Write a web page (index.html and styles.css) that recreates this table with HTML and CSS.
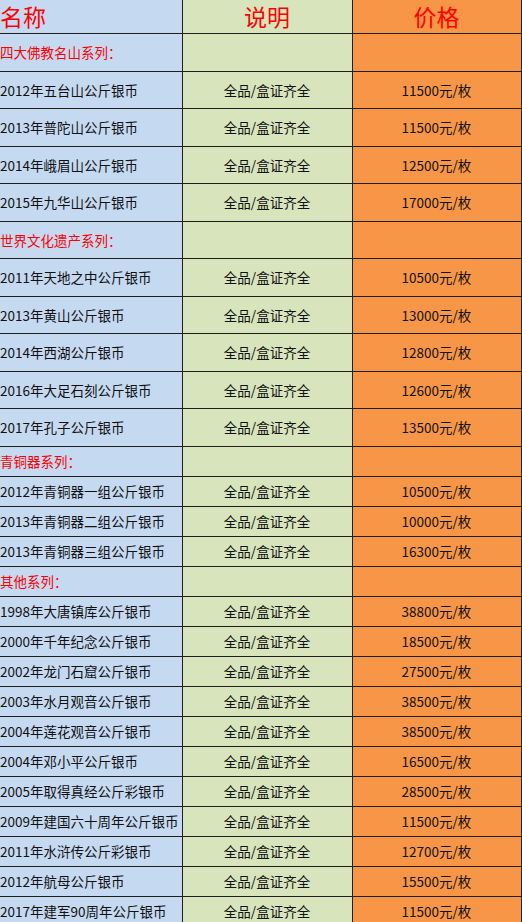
FILE: index.html
```html
<!DOCTYPE html>
<html lang="zh-CN">
<head>
<meta charset="utf-8">
<title>价格表</title>
<link rel="stylesheet" href="styles.css">
</head>
<body>
<table class="price-table">
  <colgroup>
    <col class="col-name">
    <col class="col-desc">
    <col class="col-price">
  </colgroup>
  <thead>
    <tr class="row-head">
      <th class="c-name">名称</th>
      <th class="c-desc">说明</th>
      <th class="c-price">价格</th>
    </tr>
  </thead>
  <tbody class="tall">
    <tr class="section"><td class="c-name">四大佛教名山系列：</td><td class="c-desc"></td><td class="c-price"></td></tr>
    <tr><td class="c-name">2012年五台山公斤银币</td><td class="c-desc">全品/盒证齐全</td><td class="c-price">11500元/枚</td></tr>
    <tr><td class="c-name">2013年普陀山公斤银币</td><td class="c-desc">全品/盒证齐全</td><td class="c-price">11500元/枚</td></tr>
    <tr><td class="c-name">2014年峨眉山公斤银币</td><td class="c-desc">全品/盒证齐全</td><td class="c-price">12500元/枚</td></tr>
    <tr><td class="c-name">2015年九华山公斤银币</td><td class="c-desc">全品/盒证齐全</td><td class="c-price">17000元/枚</td></tr>
    <tr class="section"><td class="c-name">世界文化遗产系列：</td><td class="c-desc"></td><td class="c-price"></td></tr>
    <tr><td class="c-name">2011年天地之中公斤银币</td><td class="c-desc">全品/盒证齐全</td><td class="c-price">10500元/枚</td></tr>
    <tr><td class="c-name">2013年黄山公斤银币</td><td class="c-desc">全品/盒证齐全</td><td class="c-price">13000元/枚</td></tr>
    <tr><td class="c-name">2014年西湖公斤银币</td><td class="c-desc">全品/盒证齐全</td><td class="c-price">12800元/枚</td></tr>
    <tr><td class="c-name">2016年大足石刻公斤银币</td><td class="c-desc">全品/盒证齐全</td><td class="c-price">12600元/枚</td></tr>
    <tr><td class="c-name">2017年孔子公斤银币</td><td class="c-desc">全品/盒证齐全</td><td class="c-price">13500元/枚</td></tr>
  </tbody>
  <tbody class="short">
    <tr class="section"><td class="c-name">青铜器系列：</td><td class="c-desc"></td><td class="c-price"></td></tr>
    <tr><td class="c-name">2012年青铜器一组公斤银币</td><td class="c-desc">全品/盒证齐全</td><td class="c-price">10500元/枚</td></tr>
    <tr><td class="c-name">2013年青铜器二组公斤银币</td><td class="c-desc">全品/盒证齐全</td><td class="c-price">10000元/枚</td></tr>
    <tr><td class="c-name">2013年青铜器三组公斤银币</td><td class="c-desc">全品/盒证齐全</td><td class="c-price">16300元/枚</td></tr>
    <tr class="section"><td class="c-name">其他系列：</td><td class="c-desc"></td><td class="c-price"></td></tr>
    <tr><td class="c-name">1998年大唐镇库公斤银币</td><td class="c-desc">全品/盒证齐全</td><td class="c-price">38800元/枚</td></tr>
    <tr><td class="c-name">2000年千年纪念公斤银币</td><td class="c-desc">全品/盒证齐全</td><td class="c-price">18500元/枚</td></tr>
    <tr><td class="c-name">2002年龙门石窟公斤银币</td><td class="c-desc">全品/盒证齐全</td><td class="c-price">27500元/枚</td></tr>
    <tr><td class="c-name">2003年水月观音公斤银币</td><td class="c-desc">全品/盒证齐全</td><td class="c-price">38500元/枚</td></tr>
    <tr><td class="c-name">2004年莲花观音公斤银币</td><td class="c-desc">全品/盒证齐全</td><td class="c-price">38500元/枚</td></tr>
    <tr><td class="c-name">2004年邓小平公斤银币</td><td class="c-desc">全品/盒证齐全</td><td class="c-price">16500元/枚</td></tr>
    <tr><td class="c-name">2005年取得真经公斤彩银币</td><td class="c-desc">全品/盒证齐全</td><td class="c-price">28500元/枚</td></tr>
    <tr><td class="c-name">2009年建国六十周年公斤银币</td><td class="c-desc">全品/盒证齐全</td><td class="c-price">11500元/枚</td></tr>
    <tr><td class="c-name">2011年水浒传公斤彩银币</td><td class="c-desc">全品/盒证齐全</td><td class="c-price">12700元/枚</td></tr>
    <tr><td class="c-name">2012年航母公斤银币</td><td class="c-desc">全品/盒证齐全</td><td class="c-price">15500元/枚</td></tr>
    <tr><td class="c-name">2017年建军90周年公斤银币</td><td class="c-desc">全品/盒证齐全</td><td class="c-price">11500元/枚</td></tr>
  </tbody>
</table>
</body>
</html>
```
FILE: styles.css
```css
html, body {
  margin: 0;
  padding: 0;
  background: #ffffff;
}

body {
  font-family: "Noto Sans CJK SC", "Noto Sans", sans-serif;
  font-size: 13.5px;
  color: #111111;
  overflow: hidden;
}

.price-table {
  border-collapse: collapse;
  table-layout: fixed;
  width: 521px;
}

.col-name { width: 182px; }
.col-desc { width: 170px; }
.col-price { width: 169px; }

.price-table th,
.price-table td {
  border: 1px solid #1f1f1f;
  padding: 0;
  white-space: nowrap;
  overflow: hidden;
  vertical-align: middle;
  line-height: 1.2;
}

.price-table tr:first-child th { border-top: none; }
.price-table th:first-child,
.price-table td:first-child { border-left: none; }

.c-name { background: #c5d9f1; text-align: left; }
.c-desc { background: #d8e4bc; text-align: center; }
.c-price { background: #f79646; text-align: center; }

.row-head th {
  height: 33px;
  font-size: 23px;
  font-weight: normal;
  color: #ff0000;
}

.tall td { height: 36.5px; }
.short td { height: 29px; }

.section .c-name { color: #ff0000; }
```
